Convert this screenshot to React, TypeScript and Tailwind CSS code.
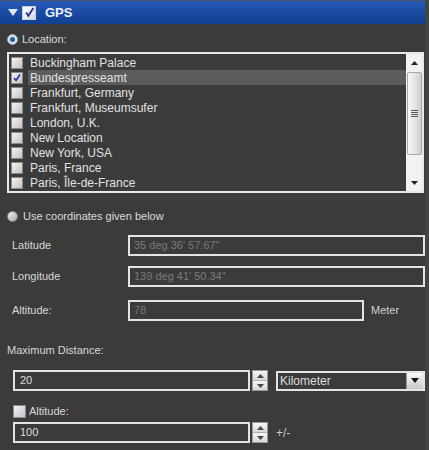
import React from "react";

const items = [
  "Buckingham Palace",
  "Bundespresseamt",
  "Frankfurt, Germany",
  "Frankfurt, Museumsufer",
  "London, U.K.",
  "New Location",
  "New York, USA",
  "Paris, France",
  "Paris, Île-de-France",
  "The Location Forum",
];

function Check({ checked, size = 12 }: { checked?: boolean; size?: number }) {
  return (
    <div
      className="shrink-0 border border-[#8a8a8a] bg-gradient-to-br from-[#f4f4f4] to-[#c4c4c4] flex items-center justify-center"
      style={{ width: size, height: size }}
    >
      {checked && (
        <svg width={size - 2} height={size - 2} viewBox="0 0 10 10">
          <path d="M2 5 L4 7.5 L8 1.5" fill="none" stroke="#1c2f9a" strokeWidth="1.6" />
        </svg>
      )}
    </div>
  );
}

function Spinner() {
  return (
    <div className="w-[16px] h-[21px] ml-[2px] flex flex-col border border-[#9a9a9a] bg-[#e9e9e9]">
      <div className="flex-1 flex items-center justify-center border-b border-[#b0b0b0] bg-gradient-to-b from-[#f6f6f6] to-[#d8d8d8]">
        <svg width="7" height="4" viewBox="0 0 7 4"><path d="M0 4 L3.5 0 L7 4Z" fill="#3a4a5a" /></svg>
      </div>
      <div className="flex-1 flex items-center justify-center bg-gradient-to-b from-[#f6f6f6] to-[#d8d8d8]">
        <svg width="7" height="4" viewBox="0 0 7 4"><path d="M0 0 L3.5 4 L7 0Z" fill="#3a4a5a" /></svg>
      </div>
    </div>
  );
}

export default function App() {
  return (
    <div
      className="w-[429px] h-[450px] bg-[#3b3b3b] overflow-hidden flex flex-col text-[11px] text-[#d4d4d4] border-r-[4px] border-[#444]"
      style={{ fontFamily: '"Liberation Sans", Arial, sans-serif' }}
    >
      {/* header */}
      <div className="h-[24px] shrink-0 border-t border-[#4b5566] bg-gradient-to-b from-[#2459b6] to-[#103f8f] flex items-center">
        <svg className="ml-[8px]" width="10" height="7" viewBox="0 0 10 7">
          <path d="M0 0 L10 0 L5 7Z" fill="#dfe6f2" />
        </svg>
        <div className="ml-[4px] w-[14px] h-[14px] bg-gradient-to-br from-white to-[#d0d6e4] border border-[#c8cfdd] flex items-center justify-center">
          <svg width="11" height="11" viewBox="0 0 10 10">
            <path d="M2 5 L4 8 L8.5 1" fill="none" stroke="#2a2f9c" strokeWidth="1.6" />
          </svg>
        </div>
        <span className="ml-[9px] text-[13px] font-bold text-[#eef2fa]">GPS</span>
      </div>

      {/* Location radio */}
      <div className="mt-[8px] h-[14px] flex items-center pl-[7px]">
        <div className="w-[11px] h-[11px] rounded-full bg-[#dde4ec] border border-[#9aa6b4] flex items-center justify-center">
          <div className="w-[5px] h-[5px] rounded-full bg-[#1f5f9a]" />
        </div>
        <span className="ml-[4px] text-[#dcdcdc]">Location:</span>
      </div>

      {/* list box */}
      <div className="mt-[6px] ml-[7px] w-[417px] h-[141px] border-2 border-[#e8e8e8] flex overflow-hidden">
        <div className="flex-1 pt-[1px] overflow-hidden">
          {items.map((it, i) => (
            <div key={it} className="h-[15px] flex items-center">
              <div className="pl-[2px] w-[19px] flex">
                <Check checked={i === 1} />
              </div>
              <div
                className={
                  "flex-1 h-full flex items-center pl-[2px] text-[12px] text-[#e2e2e2] " +
                  (i === 1 ? "bg-[#5c5c5c]" : "")
                }
              >
                {it}
              </div>
            </div>
          ))}
        </div>
        <div className="w-[16px] bg-[#f2f2f2] flex flex-col items-center">
          <div className="h-[18px] flex items-center justify-center">
            <svg width="7" height="4" viewBox="0 0 7 4"><path d="M0 4 L3.5 0 L7 4Z" fill="#222" /></svg>
          </div>
          <div className="w-[15px] h-[83px] border border-[#a8a8a8] rounded-[2px] bg-gradient-to-r from-[#f8f8f8] via-[#e6e6e6] to-[#cfcfcf] flex flex-col items-center justify-center gap-[1px]">
            <div className="w-[7px] h-[1px] bg-[#555]" />
            <div className="w-[7px] h-[1px] bg-[#555]" />
            <div className="w-[7px] h-[1px] bg-[#555]" />
            <div className="w-[7px] h-[1px] bg-[#555]" />
          </div>
          <div className="flex-1 flex items-end justify-center pb-[6px]">
            <svg width="7" height="4" viewBox="0 0 7 4"><path d="M0 0 L3.5 4 L7 0Z" fill="#222" /></svg>
          </div>
        </div>
      </div>

      {/* use coordinates radio */}
      <div className="mt-[16px] h-[14px] flex items-center pl-[7px]">
        <div className="w-[11px] h-[11px] rounded-full bg-gradient-to-br from-[#f0f0f0] to-[#a8a8a8] border border-[#8c8c8c]" />
        <span className="ml-[5px] text-[#dcdcdc]">Use coordinates given below</span>
      </div>

      {/* latitude */}
      <div className="mt-[12px] h-[21px] flex items-center">
        <span className="w-[128px] pl-[12px] text-[#d8d8d8]">Latitude</span>
        <div className="w-[297px] h-full border-2 border-[#e4e4e4] flex items-center pl-[4px] text-[#7a7a7a]">
          35 deg 36' 57.67"
        </div>
      </div>
      <div className="mt-[10px] h-[21px] flex items-center">
        <span className="w-[128px] pl-[12px] text-[#d8d8d8]">Longitude</span>
        <div className="w-[297px] h-full border-2 border-[#e4e4e4] flex items-center pl-[4px] text-[#7a7a7a]">
          139 deg 41' 50.34"
        </div>
      </div>
      <div className="mt-[13px] h-[21px] flex items-center">
        <span className="w-[128px] pl-[12px] text-[#d8d8d8]">Altitude:</span>
        <div className="w-[236px] h-full border-2 border-[#e4e4e4] flex items-center pl-[4px] text-[#7a7a7a]">
          78
        </div>
        <span className="ml-[7px] text-[#cfcfcf]">Meter</span>
      </div>

      {/* max distance */}
      <div className="mt-[22px] h-[14px] flex items-center pl-[7px] text-[#d8d8d8]">Maximum Distance:</div>
      <div className="mt-[13px] h-[21px] flex items-center pl-[13px]">
        <div className="w-[237px] h-full border-2 border-[#e4e4e4] flex items-center pl-[5px] text-[#dedede]">20</div>
        <Spinner />
        <div className="ml-[8px] w-[149px] h-[20px] border-2 border-[#e4e4e4] flex items-center">
          <span className="flex-1 pl-[2px] text-[12px] text-[#dcdcdc]">Kilometer</span>
          <div className="w-[17px] h-full bg-gradient-to-b from-[#fafafa] to-[#c8c8c8] flex items-center justify-center border-l border-[#999]">
            <svg width="8" height="5" viewBox="0 0 8 5"><path d="M0 0 L8 0 L4 5Z" fill="#111" /></svg>
          </div>
        </div>
      </div>

      {/* altitude checkbox */}
      <div className="mt-[13px] h-[14px] flex items-center pl-[13px]">
        <Check size={13} />
        <span className="ml-[3px] text-[#d8d8d8]">Altitude:</span>
      </div>
      <div className="mt-[4px] h-[21px] flex items-center pl-[13px]">
        <div className="w-[237px] h-full border-2 border-[#e4e4e4] flex items-center pl-[5px] text-[#dedede]">100</div>
        <Spinner />
        <span className="ml-[8px] text-[12px] text-[#c8c8c8]">+/-</span>
      </div>
    </div>
  );
}
